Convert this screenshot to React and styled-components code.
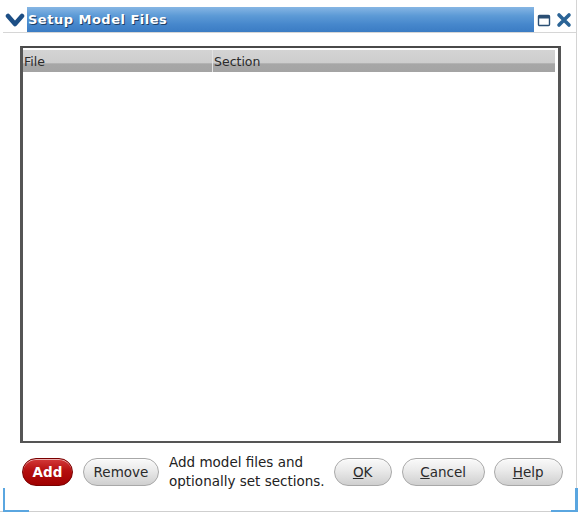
import React from 'react';
import styled, { createGlobalStyle } from 'styled-components';

const GlobalStyle = createGlobalStyle`
    html, body {
        margin: 0;
        padding: 0;
        background: #ffffff;
    }
    body {
        font-family: "DejaVu Sans", "Liberation Sans", sans-serif;
    }
`;

const Frame = styled.div`
    position: relative;
    width: 577px;
    height: 512px;
    border-right: 1px solid #d4d4d4;
    border-bottom: 1px solid #cfcfcf;
    box-sizing: border-box;
    display: flex;
    flex-direction: column;
    background: #fff;

    &::before,
    &::after {
        content: '';
        position: absolute;
        bottom: -2px;
        width: 24px;
        height: 22px;
        border-bottom: 3px solid #5aa6e0;
    }
    &::before {
        left: 3px;
        border-left: 2px solid #5aa6e0;
        border-bottom-left-radius: 2px;
    }
    &::after {
        right: -2px;
        border-right: 3px solid #5aa6e0;
        border-bottom-right-radius: 2px;
    }
`;

const TitleRow = styled.div`
    display: flex;
    align-items: stretch;
    height: 33px;
    padding-top: 7px;
    margin-left: 3px;
    border-bottom: 1px solid #d6d6d6;
    box-sizing: border-box;
`;

const AppIcon = styled.div`
    width: 24px;
    display: flex;
    align-items: center;
    justify-content: center;
`;

const TitleBar = styled.div`
    flex: 1;
    display: flex;
    align-items: center;
    padding-left: 1px;
    background: linear-gradient(180deg, #86b6e4 0%, #5c9ad6 35%, #4687cc 70%, #3b7cc4 100%);
    color: #fff;
    font-weight: bold;
    font-size: 13px;
    letter-spacing: 0.5px;
    text-shadow: 1px 1px 0 #1e3f66;
`;

const WinControls = styled.div`
    width: 42px;
    display: flex;
    align-items: center;
    justify-content: space-between;
    padding: 0 4px 0 3px;
    box-sizing: border-box;
`;

const Body = styled.div`
    flex: 1;
    display: flex;
    flex-direction: column;
    padding: 13px 15px 0 20px;
`;

const Table = styled.div`
    height: 397px;
    border-top: 2px solid #4a4a4a;
    border-left: 3px solid #555;
    border-right: 3px solid #555;
    border-bottom: 2px solid #555;
    box-sizing: border-box;
    padding: 2px 3px 0 0;
    background: #fff;
`;

const HeaderRow = styled.div`
    display: flex;
    height: 22px;
    background: linear-gradient(180deg, #d4d4d4 0%, #cdcdcd 60%, #a7a7a7 62%, #a4a4a4 100%);
`;

const HeaderCell = styled.div`
    width: ${p => p.$width || 'auto'};
    flex: ${p => (p.$width ? 'none' : 1)};
    padding-left: 1px;
    font-size: 12.5px;
    color: #2a2a2a;
    line-height: 24px;
    border-left: ${p => (p.$first ? 'none' : '1px solid #e2e2e2')};
    box-sizing: border-box;
`;

const Footer = styled.div`
    display: flex;
    align-items: center;
    height: 58px;
    padding-left: 2px;
`;

const PillButton = styled.button`
    flex-shrink: 0;
    height: 28px;
    width: ${p => p.$width}px;
    margin-right: ${p => p.$gap ?? 10}px;
    border-radius: 14px;
    font-family: "DejaVu Sans", "Liberation Sans", sans-serif;
    font-size: 13.5px;
    padding: 0;
    cursor: pointer;
    border: 1px solid ${p => (p.$primary ? '#7a0000' : '#a8a8a8')};
    color: ${p => (p.$primary ? '#fff' : '#2a2a2a')};
    font-weight: ${p => (p.$primary ? 'bold' : 'normal')};
    background: ${p =>
        p.$primary
            ? 'linear-gradient(180deg, #d43a3a 0%, #b50f0f 45%, #a00000 100%)'
            : 'linear-gradient(180deg, #fafafa 0%, #e9e9e9 45%, #cfcfcf 100%)'};
    box-shadow: inset 0 1px 0 rgba(255, 255, 255, 0.6);

    u {
        text-decoration: underline;
    }
`;

const HintText = styled.div`
    flex-shrink: 0;
    font-size: 13.5px;
    line-height: 19px;
    color: #222;
    margin-right: 9px;
    white-space: nowrap;
`;

const ChevronIcon = () => (
    <svg width="20" height="18" viewBox="0 0 20 18">
        <polyline points="3,5 10,13 17,5" fill="none" stroke="#1d4f86" strokeWidth="4.5" strokeLinejoin="round" strokeLinecap="round" />
    </svg>
);

const RestoreIcon = () => (
    <svg width="14" height="14" viewBox="0 0 14 14">
        <rect x="1.5" y="2.5" width="11" height="10" fill="#fff" stroke="#2b4f74" strokeWidth="1.4" rx="1" />
        <rect x="1.5" y="2.5" width="11" height="3" fill="#2b4f74" />
    </svg>
);

const CloseIcon = () => (
    <svg width="16" height="16" viewBox="0 0 16 16">
        <path d="M3 3 L13 13 M13 3 L3 13" stroke="#2b6496" strokeWidth="3.6" strokeLinecap="round" />
    </svg>
);

const App = () => {
    return (
        <>
            <GlobalStyle />
            <Frame>
                <TitleRow>
                    <AppIcon>
                        <ChevronIcon />
                    </AppIcon>
                    <TitleBar>Setup Model Files</TitleBar>
                    <WinControls>
                        <RestoreIcon />
                        <CloseIcon />
                    </WinControls>
                </TitleRow>
                <Body>
                    <Table>
                        <HeaderRow>
                            <HeaderCell $first $width="189px">File</HeaderCell>
                            <HeaderCell>Section</HeaderCell>
                        </HeaderRow>
                    </Table>
                    <Footer>
                        <PillButton $primary $width={51}>Add</PillButton>
                        <PillButton $width={76}>Remove</PillButton>
                        <HintText>
                            Add model files and
                            <br />
                            optionally set sections.
                        </HintText>
                        <PillButton $width={58}><u>O</u>K</PillButton>
                        <PillButton $width={83} $gap={9}><u>C</u>ancel</PillButton>
                        <PillButton $width={69} $gap={0}><u>H</u>elp</PillButton>
                    </Footer>
                </Body>
            </Frame>
        </>
    );
};

export default App;
